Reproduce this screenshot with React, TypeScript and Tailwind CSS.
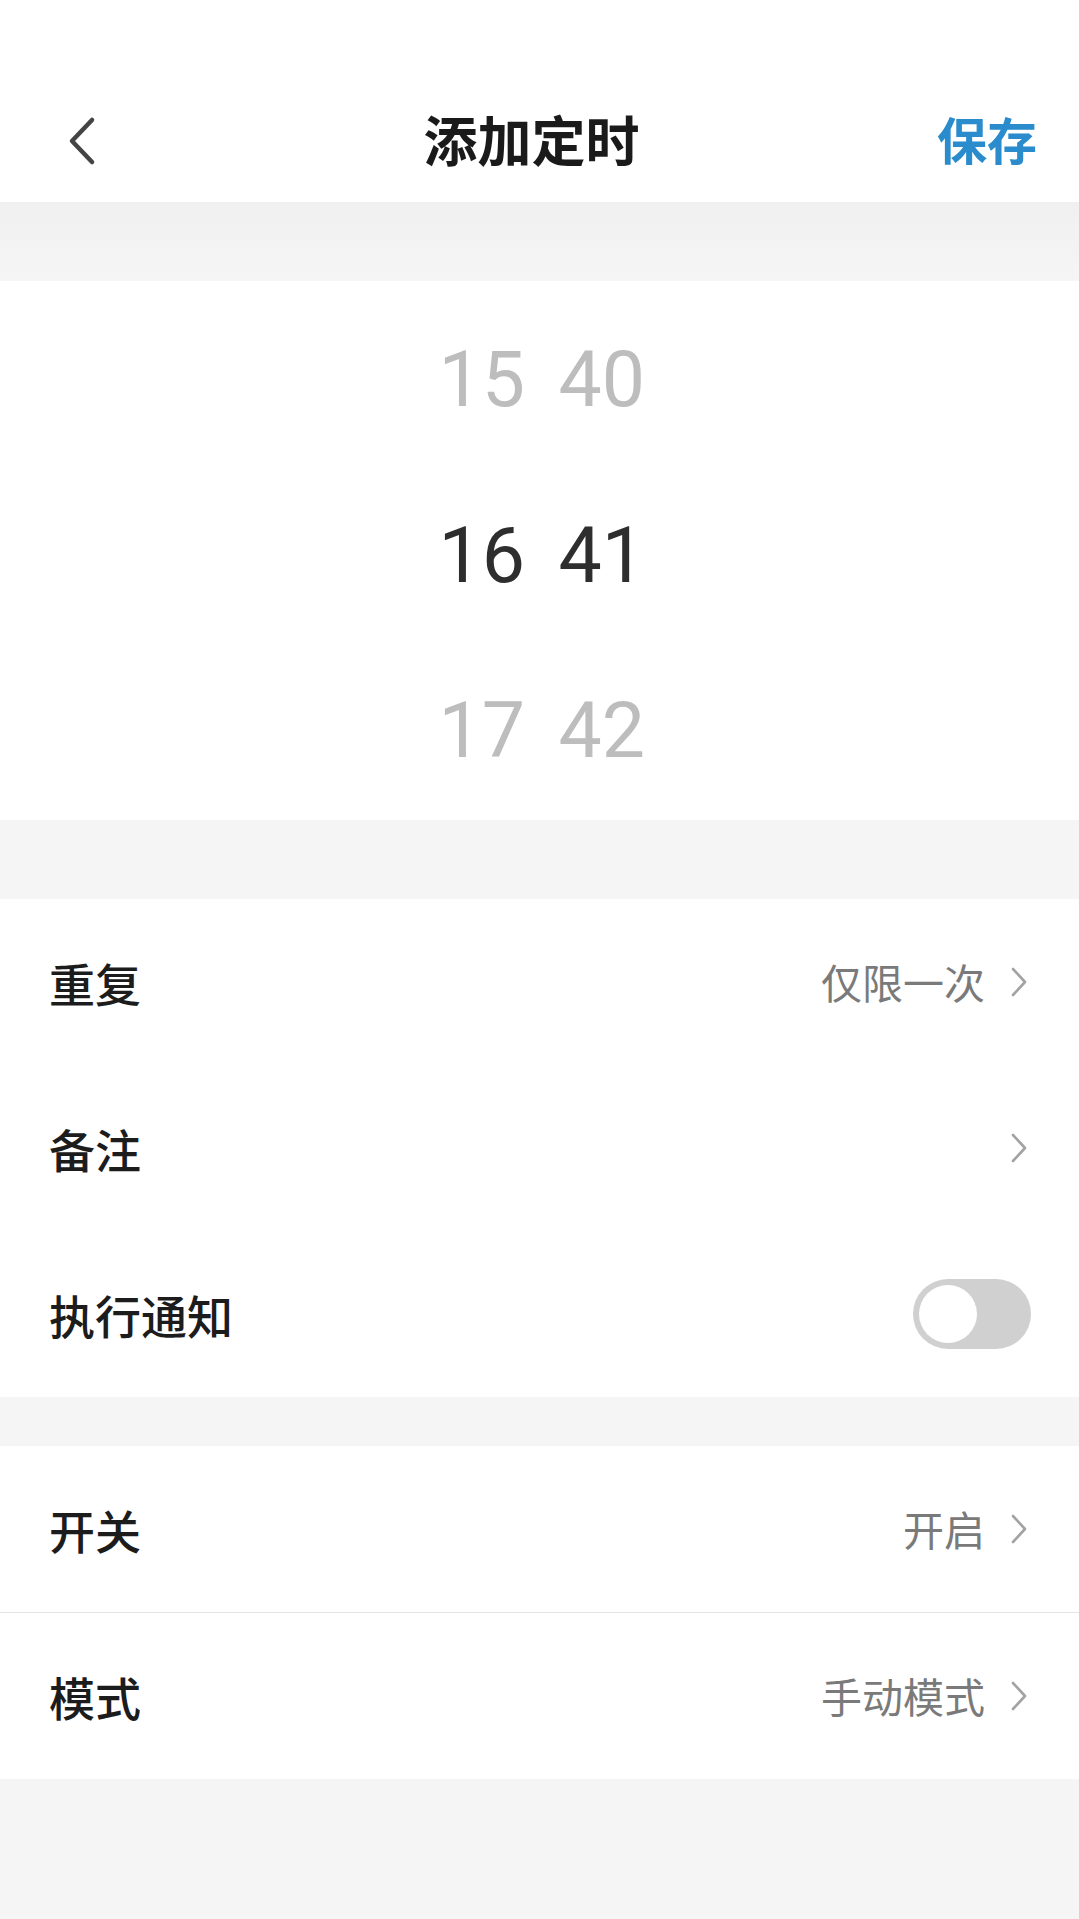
import { useState } from "react";

const CJK = "font-['Noto_Sans_CJK_SC','Noto_Sans',sans-serif]";

function ChevronRight() {
  return (
    <svg width="24" height="32" viewBox="0 0 24 32" fill="none" aria-hidden="true">
      <path d="M6 3l12 13-12 13" stroke="#a3a3a3" strokeWidth="2.6" strokeLinecap="round" strokeLinejoin="round" />
    </svg>
  );
}

function Row({ label, value, arrow = true, children }: { label: string; value?: string; arrow?: boolean; children?: React.ReactNode }) {
  return (
    <div className="flex h-[166px] items-center justify-between pl-[49px] pr-[48px]">
      <span className="text-[46px] font-medium text-[#1c1c1c]">{label}</span>
      <div className="flex items-center gap-[22px]">
        {value && <span className="text-[41px] text-[#7a7a7a]">{value}</span>}
        {arrow && <ChevronRight />}
        {children}
      </div>
    </div>
  );
}

function Toggle() {
  const [on, setOn] = useState(false);
  return (
    <button
      onClick={() => setOn((v) => !v)}
      aria-label="执行通知"
      className={`flex h-[70px] w-[118px] items-center rounded-full p-[6px] ${on ? "justify-end bg-[#2d8cd0]" : "justify-start bg-[#d0d0d0]"}`}
    >
      <span className="block h-[58px] w-[58px] rounded-full bg-white" />
    </button>
  );
}

const HOURS = ["15", "16", "17"];
const MINUTES = ["40", "41", "42"];

export default function App() {
  return (
    <div className={`flex min-h-[1919px] w-full flex-col bg-[#f5f5f5] ${CJK}`}>
      {/* header */}
      <div className="flex h-[202px] items-end bg-white pb-[26px]">
        <div className="relative flex h-[76px] w-full items-center justify-center pr-[16px]">
          <button aria-label="返回" className="absolute left-[64px] top-[16px]">
            <svg width="36" height="50" viewBox="0 0 36 50" fill="none" aria-hidden="true">
              <path d="M28 4L8 25l20 21" stroke="#444" strokeWidth="4.5" strokeLinecap="round" strokeLinejoin="round" />
            </svg>
          </button>
          <span className="text-[54px] font-bold text-[#1a1a1a]">添加定时</span>
          <button className="absolute right-[42px] text-[50px] font-bold text-[#2a8ccc]">保存</button>
        </div>
      </div>
      <div className="h-[79px] bg-gradient-to-b from-[#f0f0f0] to-[#f5f5f5]" />

      {/* time picker */}
      <div className="flex h-[539px] flex-col justify-center bg-white pt-[12px] font-['Roboto',sans-serif]">
        {HOURS.map((h, i) => {
          const active = i === 1;
          return (
            <div key={h} className="flex h-[180px] items-center justify-center gap-[38px]">
              <span className={`w-[82px] text-right text-[77px] ${active ? "text-[#2e2e2e]" : "text-[#bdbdbd]"}`}>{h}</span>
              <span className={`w-[82px] text-left text-[77px] ${active ? "text-[#2e2e2e]" : "text-[#bdbdbd]"}`}>{MINUTES[i]}</span>
            </div>
          );
        })}
      </div>
      <div className="h-[79px]" />

      {/* settings */}
      <div className="bg-white">
        <Row label="重复" value="仅限一次" />
        <Row label="备注" />
        <Row label="执行通知" arrow={false}>
          <Toggle />
        </Row>
      </div>
      <div className="h-[49px]" />

      <div className="bg-white">
        <Row label="开关" value="开启" />
        <div className="h-px bg-[#e4e4e4]" />
        <Row label="模式" value="手动模式" />
      </div>
    </div>
  );
}
